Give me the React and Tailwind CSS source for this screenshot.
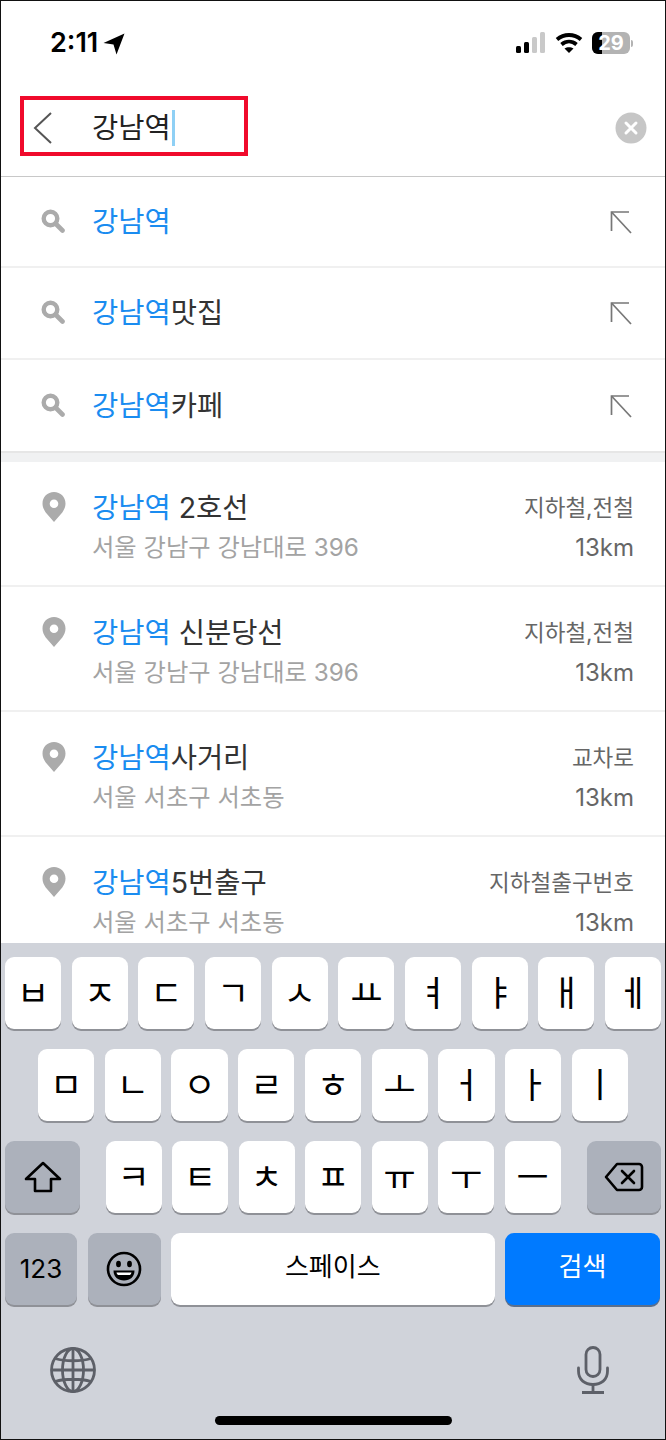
const FONT = '"Inter", "Noto Sans CJK KR", sans-serif';

const suggestions = ['', '맛집', '카페'];
const results = [
  { tail: ' 2호선', addr: '서울 강남구 강남대로 396', kind: '지하철,전철' },
  { tail: ' 신분당선', addr: '서울 강남구 강남대로 396', kind: '지하철,전철' },
  { tail: '사거리', addr: '서울 서초구 서초동', kind: '교차로' },
  { tail: '5번출구', addr: '서울 서초구 서초동', kind: '지하철출구번호' },
];
const row1 = ['ㅂ', 'ㅈ', 'ㄷ', 'ㄱ', 'ㅅ', 'ㅛ', 'ㅕ', 'ㅑ', 'ㅐ', 'ㅔ'];
const row2 = ['ㅁ', 'ㄴ', 'ㅇ', 'ㄹ', 'ㅎ', 'ㅗ', 'ㅓ', 'ㅏ', 'ㅣ'];
const row3 = ['ㅋ', 'ㅌ', 'ㅊ', 'ㅍ', 'ㅠ', 'ㅜ', 'ㅡ'];

function SearchGlyph() {
  return (
    <svg width="24" height="24" viewBox="0 0 24 24" fill="none" stroke="#ababab">
      <circle cx="9.500" cy="9.500" r="6.800" strokeWidth="4.400" />
      <path d="M15 15l6.500 6.500" strokeWidth="4.600" strokeLinecap="round" />
    </svg>
  );
}

function FillArrow() {
  return (
    <svg width="22" height="24" viewBox="0 0 22 24" fill="none" stroke="#777" strokeWidth="1.700">
      <path d="M1.500 21V2H19" />
      <path d="M1.500 2L21 23" />
    </svg>
  );
}

function Pin() {
  return (
    <svg width="24" height="30" viewBox="0 0 24 30">
      <path
        fillRule="evenodd"
        fill="#ababab"
        d="M12 0C5.400 0 .5 5 .5 11.400c0 3.400 1.300 6 3.200 9L12 30l8.300-9.600c1.900-3 3.200-5.600 3.200-9C23.500 5 18.600 0 12 0zm0 7.400a4.300 4.300 0 1 1 0 8.600 4.300 4.300 0 0 1 0-8.600z"
      />
    </svg>
  );
}

function StatusBar() {
  return (
    <div className="h-[84px] shrink-0 flex items-start justify-between pt-[26px] pl-[49px] pr-[32px]">
      <div className="flex items-center gap-[5px]">
        <span className="text-[27px] leading-[32px] font-semibold text-black">2:11</span>
        <svg width="22" height="22" viewBox="0 0 22 22" className="mt-[1px]">
          <path d="M21.500 .5L.5 10l10 1.500L13.500 21.500z" fill="#000" />
        </svg>
      </div>
      <div className="flex items-center gap-[9px] mt-[5px]">
        <svg width="30" height="22" viewBox="0 0 30 22">
          <rect x="0" y="14" width="5" height="7" rx="1.500" fill="#000" />
          <rect x="8" y="10" width="5" height="11" rx="1.500" fill="#000" />
          <rect x="16" y="5" width="5" height="16" rx="1.500" fill="#c9c9c9" />
          <rect x="24" y="0" width="5" height="21" rx="1.500" fill="#c9c9c9" />
        </svg>
        <svg width="28" height="22" viewBox="0 0 28 22" fill="none" stroke="#000" strokeWidth="3.800">
          <path d="M2 7.500c7-6 17-6 24 0" />
          <path d="M6.500 12.500c4.500-3.800 10.500-3.800 15 0" />
          <path d="M14 21l-4.500-4.500c2.500-1.800 6.500-1.800 9 0z" fill="#000" stroke="none" />
        </svg>
        <div className="flex items-center gap-[1px]">
          <div className="relative h-[22px] w-[38px] rounded-[6px] bg-[#b3b3b3] overflow-hidden">
            <div className="absolute left-0 top-0 bottom-0 w-[10px] bg-black" />
            <span className="absolute inset-0 flex items-center justify-center text-[20px] font-bold leading-none text-white">29</span>
          </div>
          <div className="w-[2px] h-[7px] rounded-r-full bg-[#b3b3b3]" />
        </div>
      </div>
    </div>
  );
}

function Header() {
  return (
    <div className="relative h-[92px] shrink-0 flex items-center border-b border-[#c8c8c8] pl-[32px] pr-[18px] pb-[6px]">
      <svg width="20" height="32" viewBox="0 0 20 32" fill="none" stroke="#555" strokeWidth="2" className="shrink-0">
        <path d="M18 1L2 16l16 15" />
      </svg>
      <div className="ml-[39px] flex items-center flex-1">
        <span className="text-[28.500px] leading-[36px] text-[#222]">강남역</span>
        <span className="ml-[1px] w-[3px] h-[36px] bg-[#8fd0f5]" />
      </div>
      <svg width="32" height="32" viewBox="0 0 32 32">
        <circle cx="16" cy="16" r="15.500" fill="#c6c6c6" />
        <path d="M11 11l10 10M21 11L11 21" stroke="#fff" strokeWidth="3" strokeLinecap="round" />
      </svg>
      {/* Highlight frame drawn over the search field */}
      <div className="absolute left-[19px] top-[11px] w-[228px] h-[60px] border-[4px] border-[#f00a2c]" />
    </div>
  );
}

function SuggestionRow({ tail, index }) {
  const rowClass =
    index === 1
      ? 'h-[92px] border-b-2 border-[#f0f0f0]'
      : index === 0
        ? 'h-[91px] border-b-2 border-[#f0f0f0]'
        : 'h-[91px]';
  return (
    <div className={`shrink-0 flex items-center pl-[40px] pr-[33px] ${rowClass}`}>
      <div className="w-[51px] shrink-0 pb-[2px]">
        <SearchGlyph />
      </div>
      <div className="flex-1 text-[28.500px] leading-[36px] text-[#333]">
        <span className="text-[#1a8cf0]">강남역</span>
        {tail}
      </div>
      <FillArrow />
    </div>
  );
}

function ResultRow({ item }) {
  return (
    <div className="h-[125px] shrink-0 flex border-b-2 border-[#f0f0f0] pl-[41px] pr-[31px] pt-[28px]">
      <div className="w-[50px] shrink-0 pt-[2px]">
        <Pin />
      </div>
      <div className="flex-1 flex flex-col gap-[5px]">
        <div className="flex justify-between items-center h-[35px]">
          <div className="text-[28.500px] leading-[35px] text-[#333] whitespace-pre">
            <span className="text-[#1a8cf0]">강남역</span>
            {item.tail}
          </div>
          <div className="text-[22.500px] leading-[35px] text-[#666]">{item.kind}</div>
        </div>
        <div className="flex justify-between items-center h-[35px]">
          <div className="text-[24.300px] leading-[35px] text-[#a3a3a3]">{item.addr}</div>
          <div className="text-[24px] leading-[35px] text-[#666]">13km</div>
        </div>
      </div>
    </div>
  );
}

function Key({ children, className = '' }) {
  return (
    <div className={`h-[72px] flex items-center justify-center rounded-[9px] bg-white shadow-[0_2px_0_#8f9197] text-[35px] leading-none text-black ${className}`}>
      {children}
    </div>
  );
}

function ShiftIcon() {
  return (
    <svg width="38" height="32" viewBox="0 0 38 32" fill="none" stroke="#000" strokeWidth="2.600" strokeLinejoin="round">
      <path d="M19 2L2 18h9v12h16V18h9z" />
    </svg>
  );
}

function DeleteIcon() {
  return (
    <svg width="40" height="30" viewBox="0 0 40 30" fill="none" stroke="#000" strokeWidth="2.600" strokeLinejoin="round">
      <path d="M13 2h22a3 3 0 0 1 3 3v20a3 3 0 0 1-3 3H13L2 15z" />
      <path d="M18 9l12 12M30 9L18 21" strokeLinecap="round" />
    </svg>
  );
}

function EmojiIcon() {
  return (
    <svg width="36" height="36" viewBox="0 0 36 36">
      <circle cx="18" cy="18" r="16" fill="none" stroke="#000" strokeWidth="2.600" />
      <ellipse cx="12.500" cy="13" rx="2.400" ry="3.200" />
      <ellipse cx="23.500" cy="13" rx="2.400" ry="3.200" />
      <path d="M7.500 19.500h21c0 6.500-4.500 10-10.500 10s-10.500-3.500-10.500-10z" />
      <path d="M10.500 21.500h15c-.5 1.500-1 2-1.500 2.500H12c-.5-.5-1.200-1-1.500-2.500z" fill="#fff" />
    </svg>
  );
}

function GlobeIcon() {
  return (
    <svg width="46" height="46" viewBox="0 0 46 46" fill="none" stroke="#5d6068" strokeWidth="2.800">
      <circle cx="23" cy="23" r="21.500" />
      <ellipse cx="23" cy="23" rx="10.500" ry="21.500" />
      <path d="M23 1.500v43M1.500 23h43M5 11.500c10 3 26 3 36 0M5 34.500c10-3 26-3 36 0" />
    </svg>
  );
}

function MicIcon() {
  return (
    <svg width="32" height="48" viewBox="0 0 32 48" fill="none" stroke="#5d6068" strokeWidth="2.800">
      <rect x="9" y="1.500" width="14" height="29" rx="7" />
      <path d="M1.500 22v3c0 9 6.500 13.500 14.500 13.500S30.500 34 30.500 25v-3" strokeLinecap="round" />
      <path d="M16 38.500v7.500M5 46.500h22" />
    </svg>
  );
}

function Keyboard() {
  return (
    <div className="h-[496px] shrink-0 bg-[#d0d3da] flex flex-col pt-[14px]">
      <div className="flex flex-col gap-[20px]">
        <div className="flex gap-[10.500px] pl-[4px] pr-[4px]">
          {row1.map((k) => (
            <Key key={k} className="flex-1">{k}</Key>
          ))}
        </div>
        <div className="flex gap-[10.500px] pl-[37px] pr-[37px]">
          {row2.map((k) => (
            <Key key={k} className="flex-1">{k}</Key>
          ))}
        </div>
        <div className="flex pl-[4px] pr-[4px] justify-between">
          <Key className="w-[75px] !bg-[#acb1bb]"><ShiftIcon /></Key>
          <div className="flex gap-[10.500px] pr-[1px]">
            {row3.map((k) => (
              <Key key={k} className="w-[56px]">{k}</Key>
            ))}
          </div>
          <Key className="w-[74px] !bg-[#acb1bb]"><DeleteIcon /></Key>
        </div>
        <div className="flex gap-[10.500px] pl-[4px] pr-[5px]">
          <Key className="w-[72px] !bg-[#acb1bb] !text-[26px]">123</Key>
          <Key className="w-[73px] !bg-[#acb1bb]"><EmojiIcon /></Key>
          <Key className="flex-1 !text-[26px] pb-[4px]">스페이스</Key>
          <Key className="w-[155px] !bg-[#007aff] !text-white !text-[26px] pb-[4px] !shadow-[0_2px_0_#5a6f8c]">검색</Key>
        </div>
      </div>
      <div className="flex justify-between pl-[49px] pr-[56px] mt-[41px] items-center">
        <GlobeIcon />
        <MicIcon />
      </div>
      <div className="mt-[22px] self-center w-[237px] h-[9px] rounded-full bg-black" />
    </div>
  );
}

export default function App() {
  return (
    <div
      className="w-[666px] h-[1440px] bg-white border border-[#111] flex flex-col overflow-hidden"
      style={{ fontFamily: FONT }}
    >
      <StatusBar />
      <Header />
      <div className="flex-1 min-h-0 overflow-hidden flex flex-col">
        {suggestions.map((t, i) => (
          <SuggestionRow key={t} tail={t} index={i} />
        ))}
        <div className="h-[11px] shrink-0 bg-[#f0f1f2] border-t-2 border-[#e6e6e6]" />
        {results.map((r) => (
          <ResultRow key={r.tail} item={r} />
        ))}
      </div>
      <Keyboard />
    </div>
  );
}
